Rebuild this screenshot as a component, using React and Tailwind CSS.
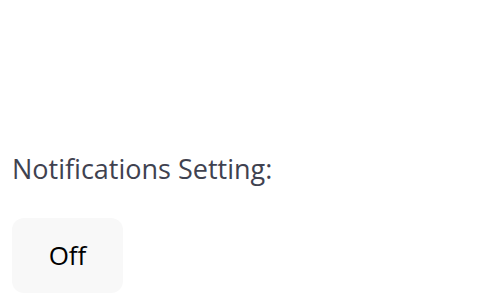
export default function App() {
  return (
    <div className="w-[480px] h-[300px] bg-white overflow-hidden font-['Open_Sans',sans-serif]">
      <div className="pt-[150px] pl-3">
        <p className="text-[27px] leading-[38px] text-[#3f4250]">Notifications Setting:</p>
        <button className="mt-[30px] w-[111px] h-[75px] rounded-xl bg-[#f8f8f8] text-[26px] font-medium text-black">
          Off
        </button>
      </div>
    </div>
  )
}
